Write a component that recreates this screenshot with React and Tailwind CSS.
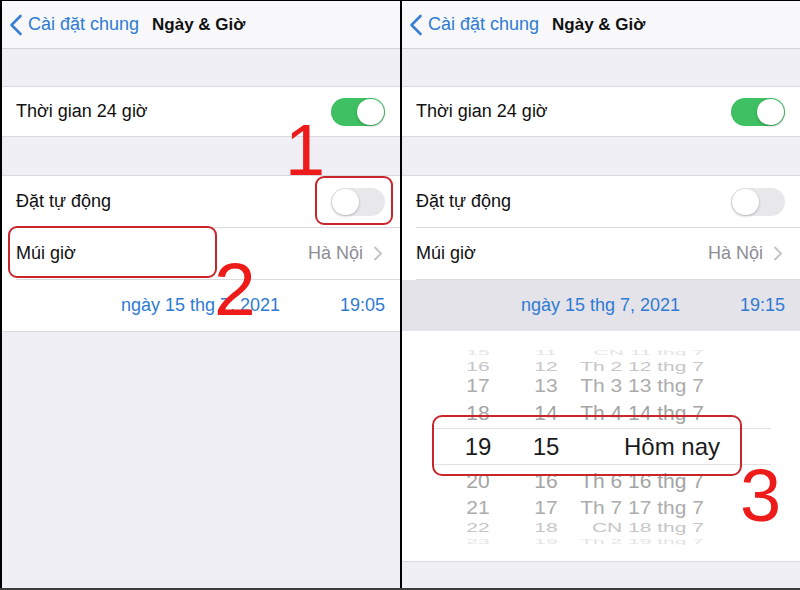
import React from 'react'

const FONT = { fontFamily: '"Liberation Sans", Arial, sans-serif' }

const PICKER = [
  { h: '15', m: '11', d: 'CN 11 thg 7', row: 'h-[12px]', txt: 'text-[#e4e4e4] scale-y-[0.3]' },
  { h: '16', m: '12', d: 'Th 2 12 thg 7', row: 'h-[16px]', txt: 'text-[#c6c6c6] scale-y-[0.6]' },
  { h: '17', m: '13', d: 'Th 3 13 thg 7', row: 'h-[23px]', txt: 'text-[#acacac] scale-y-[0.9]' },
  { h: '18', m: '14', d: 'Th 4 14 thg 7', row: 'h-[31px]', txt: 'text-[#a4a4a4]' },
  { center: true },
  { h: '20', m: '16', d: 'Th 6 16 thg 7', row: 'h-[30px]', txt: 'text-[#a4a4a4]' },
  { h: '21', m: '17', d: 'Th 7 17 thg 7', row: 'h-[24px]', txt: 'text-[#acacac] scale-y-[0.9]' },
  { h: '22', m: '18', d: 'CN 18 thg 7', row: 'h-[16px]', txt: 'text-[#c6c6c6] scale-y-[0.6]' },
  { h: '23', m: '19', d: 'Th 2 19 thg 7', row: 'h-[12px]', txt: 'text-[#e4e4e4] scale-y-[0.3]' },
]

function Toggle({ on }) {
  return (
    <div className={`w-[54px] h-[28px] rounded-full flex items-center px-[1px] ${on ? 'bg-[#3ec063] justify-end' : 'bg-[#e8e8ea] justify-start'}`}>
      <div className="w-[27px] h-[26px] rounded-full bg-white shadow-[0_1px_3px_rgba(0,0,0,0.25)]" />
    </div>
  )
}

function Panel({ time, picker }) {
  return (
    <div className="w-[400px] h-full border-l-2 border-black flex flex-col bg-[#f0eff5]">
      {/* Nav */}
      <div className="h-[48px] bg-[#f8f8fa] border-b border-[#d4d4d8] flex items-center pl-[7px] shrink-0">
        <svg width="14" height="22" viewBox="0 0 14 22" className="shrink-0">
          <polyline points="11.5,2 2.5,11 11.5,20" fill="none" stroke="#3a80d8" strokeWidth="2.6" strokeLinecap="round" strokeLinejoin="round" />
        </svg>
        <span className="ml-[5px] text-[18px] text-[#2f7bd3]">Cài đặt chung</span>
        <span className="ml-[13px] text-[17px] font-bold text-[#111]">Ngày &amp; Giờ</span>
      </div>

      <div className="h-[37px] shrink-0" />

      <div className="h-[51px] bg-white border-y border-[#dadade] flex items-center justify-between pl-[14px] pr-[15px] shrink-0">
        <span className="text-[18px] text-[#111]">Thời gian 24 giờ</span>
        <Toggle on />
      </div>

      <div className="h-[38px] shrink-0" />

      <div className="bg-white border-y border-[#dadade] shrink-0">
        <div className="h-[51px] flex items-center justify-between pl-[14px] pr-[15px]">
          <span className="text-[18px] text-[#111]">Đặt tự động</span>
          <Toggle />
        </div>
        <div className="ml-[14px] h-px bg-[#dadade]" />
        <div className="h-[51px] flex items-center pl-[14px] pr-[17px]">
          <span className="text-[18px] text-[#111]">Múi giờ</span>
          <span className="ml-auto text-[18px] text-[#8e8e93]">Hà Nội</span>
          <svg width="10" height="15" viewBox="0 0 10 15" className="ml-[10px]">
            <polyline points="2,1.5 8,7.5 2,13.5" fill="none" stroke="#c4c4c8" strokeWidth="2" strokeLinecap="round" strokeLinejoin="round" />
          </svg>
        </div>
        <div className="ml-[14px] h-px bg-[#dadade]" />
        <div className={`h-[51px] flex items-center pr-[15px] ${picker ? 'bg-[#e4e3e9]' : ''}`}>
          <span className="ml-[119px] text-[18px] text-[#2f7bd3]">ngày 15 thg 7, 2021</span>
          <span className="ml-auto text-[18px] text-[#2f7bd3]">{time}</span>
        </div>
        {picker && (
          <div className="h-[230px] pt-[15px] bg-white flex flex-col">
            {PICKER.map((r, i) =>
              r.center ? (
                <div key={i} className="ml-[30px] w-[339px] h-[37px] border-y border-[#e2e2e4] flex items-center text-[24px] text-[#1c1c1c] leading-none">
                  <span className="w-[92px] text-center">19</span>
                  <span className="w-[44px] text-center">15</span>
                  <span className="w-[152px] text-right">Hôm nay</span>
                </div>
              ) : (
                <div key={i} className={`ml-[30px] w-[339px] ${r.row} flex items-center text-[21px] leading-none`}>
                  <span className={`w-[92px] text-center ${r.txt}`}>{r.h}</span>
                  <span className={`w-[44px] text-center ${r.txt}`}>{r.m}</span>
                  <span className={`w-[136px] text-right whitespace-nowrap ${r.txt}`}>{r.d}</span>
                </div>
              )
            )}
          </div>
        )}
      </div>
    </div>
  )
}

export default function App() {
  return (
    <div className="relative w-[800px] h-[590px] overflow-hidden flex border-t border-black border-b-2 border-b-[#3c3c3c] bg-white" style={FONT}>
      <Panel time="19:05" />
      <Panel time="19:15" picker />

      {/* annotations */}
      <div className="absolute left-[315px] top-[175px] w-[78px] h-[49px] rounded-[9px] border-2 border-[#c9262c]" />
      <div className="absolute left-[8px] top-[225px] w-[209px] h-[52px] rounded-[9px] border-2 border-[#c9262c]" />
      <div className="absolute left-[432px] top-[414px] w-[310px] h-[61px] rounded-[10px] border-2 border-[#c9262c]" />
      <div className="absolute left-[285px] top-[113px] text-[72px] leading-none text-[#ee1b1b]">1</div>
      <div className="absolute left-[214px] top-[251px] text-[75px] leading-none text-[#ee1b1b]">2</div>
      <div className="absolute left-[740px] top-[458px] text-[74px] leading-none text-[#ee1b1b]">3</div>
    </div>
  )
}
